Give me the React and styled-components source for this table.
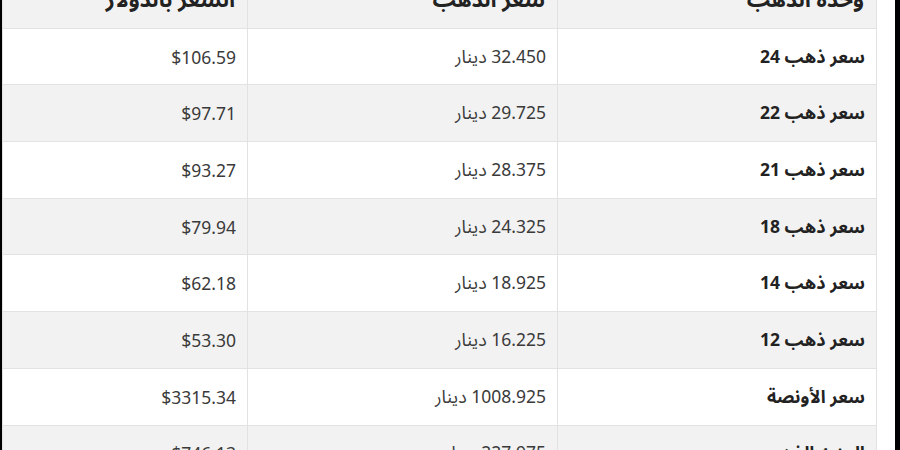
import styled, { createGlobalStyle } from "styled-components";

const GlobalStyle = createGlobalStyle`
  html, body {
    margin: 0;
    padding: 0;
    background: #000;
    overflow: hidden;
  }
`;

const Page = styled.div`
  width: 900px;
  height: 450px;
  display: flex;
  overflow: hidden;
`;

const Frame = styled.div`
  margin-left: 2px;
  width: 893px;
  height: 450px;
  background: #fff;
  padding-right: 18px;
  box-sizing: border-box;
  direction: rtl;
  overflow: hidden;
`;

const Table = styled.table`
  width: 100%;
  margin-top: -29px;
  border-collapse: collapse;
  table-layout: fixed;
  font-family: "Noto Sans", "Noto Sans Arabic", "DejaVu Sans", sans-serif;
  font-size: 17.5px;
  color: #3a3a3a;
`;

const Row = styled.tr`
  height: 56.7px;
  background: ${(props) => (props.$shaded ? "#f2f2f2" : "#fff")};
`;

const HeadCell = styled.th`
  box-sizing: border-box;
  border: 1px solid #e2e2e2;
  padding: 0 12px;
  text-align: right;
  font-size: 21.5px;
  font-weight: bold;
  color: #222;
  width: ${(props) => (props.$w ? `${props.$w}px` : "auto")};
`;

const Cell = styled.td`
  border: 1px solid #e2e2e2;
  padding: 0 11px;
  text-align: right;
  vertical-align: middle;
  white-space: nowrap;
  font-weight: ${(props) => (props.$bold ? "bold" : "normal")};
  color: ${(props) => (props.$bold ? "#222" : "#3a3a3a")};
`;

const Word = styled.span`
  font-size: 1.02em;
`;

const rows = [
  ["سعر ذهب", "24", "32.450", "$106.59"],
  ["سعر ذهب", "22", "29.725", "$97.71"],
  ["سعر ذهب", "21", "28.375", "$93.27"],
  ["سعر ذهب", "18", "24.325", "$79.94"],
  ["سعر ذهب", "14", "18.925", "$62.18"],
  ["سعر ذهب", "12", "16.225", "$53.30"],
  ["سعر الأونصة", "", "1008.925", "$3315.34"],
  ["الجنيه الذهب", "", "227.975", "$746.13"],
];

export default function App() {
  return (
    <Page>
      <GlobalStyle />
      <Frame>
        <Table>
          <thead>
            <Row $shaded>
              <HeadCell $w={319}>
                <Word>وحدة الذهب</Word>
              </HeadCell>
              <HeadCell $w={310}>
                <Word>سعر الذهب</Word>
              </HeadCell>
              <HeadCell>
                <Word>السعر بالدولار</Word>
              </HeadCell>
            </Row>
          </thead>
          <tbody>
            {rows.map(([label, karat, price, usd], i) => (
              <Row key={label + karat} $shaded={i % 2 === 1}>
                <Cell $bold>
                  <Word>{label}</Word>
                  {karat && ` ${karat}`}
                </Cell>
                <Cell>
                  {price} <Word>دينار</Word>
                </Cell>
                <Cell>
                  <bdi>{usd}</bdi>
                </Cell>
              </Row>
            ))}
          </tbody>
        </Table>
      </Frame>
    </Page>
  );
}
